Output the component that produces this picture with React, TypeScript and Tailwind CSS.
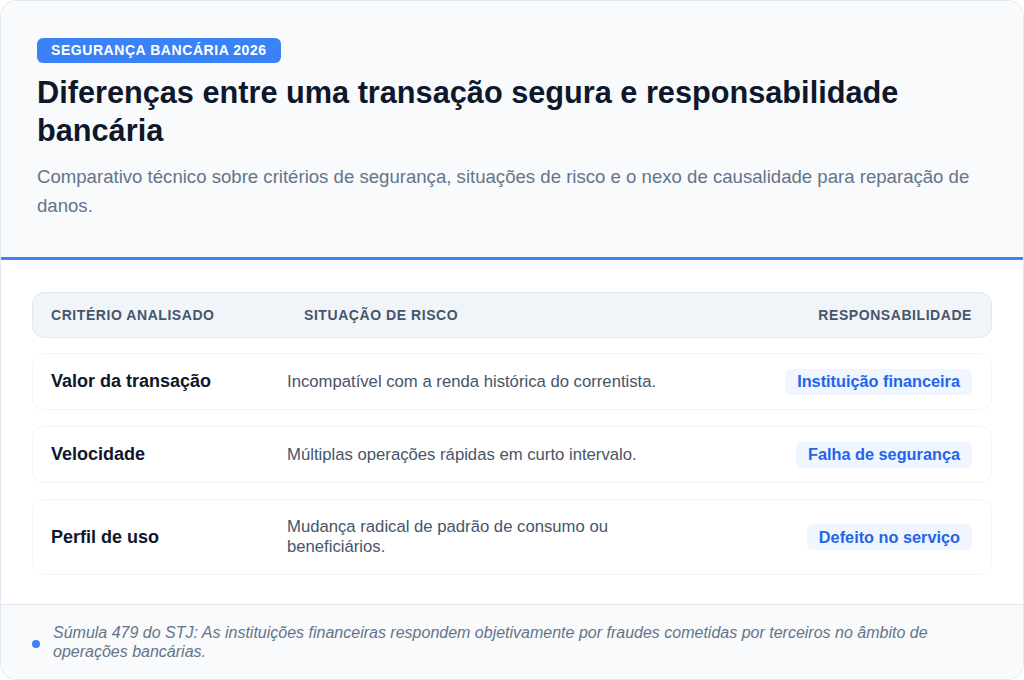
const rows = [
  {
    criterio: "Valor da transação",
    situacao: "Incompatível com a renda histórica do correntista.",
    resp: "Instituição financeira",
    h: "h-[57px]",
  },
  {
    criterio: "Velocidade",
    situacao: "Múltiplas operações rápidas em curto intervalo.",
    resp: "Falha de segurança",
    h: "h-[57px]",
  },
  {
    criterio: "Perfil de uso",
    situacao: "Mudança radical de padrão de consumo ou beneficiários.",
    resp: "Defeito no serviço",
    h: "h-[76px]",
  },
];

export default function App() {
  return (
    <div
      className="w-[1024px] h-[680px] bg-white"
      style={{ fontFamily: '"Liberation Sans", Arial, sans-serif' }}
    >
      <div className="h-full flex flex-col rounded-2xl border border-slate-200 overflow-hidden">
        {/* header */}
        <div className="bg-[#f8fafc] px-[36px] pt-[37px] pb-[37px] border-b-[3px] border-[#3b82f6]">
          <span className="inline-flex items-center h-[25px] px-[14px] rounded-md bg-[#3b82f6] text-white text-[14px] font-bold tracking-[0.04em]">
            SEGURANÇA BANCÁRIA 2026
          </span>
          <h1 className="mt-[11px] text-[30.7px] leading-[38px] font-bold text-[#0f172a] pr-[60px]">
            Diferenças entre uma transação segura e responsabilidade bancária
          </h1>
          <p className="mt-[12px] text-[18.6px] leading-[29px] text-[#64748b] pr-[10px]">
            Comparativo técnico sobre critérios de segurança, situações de risco e o nexo de
            causalidade para reparação de danos.
          </p>
        </div>

        {/* table */}
        <div className="flex-1 px-[31px] pt-[32px]">
          <div className="flex items-center h-[46px] rounded-xl bg-[#f1f5f9] border border-slate-200 pl-[18px] pr-[19px] text-[14px] font-bold tracking-[0.04em] text-[#475569]">
            <div className="w-[253px]">CRITÉRIO ANALISADO</div>
            <div className="flex-1">SITUAÇÃO DE RISCO</div>
            <div>RESPONSABILIDADE</div>
          </div>
          <div className="mt-[15px] flex flex-col gap-[16px]">
            {rows.map((r) => (
              <div
                key={r.criterio}
                className={`flex items-center ${r.h} rounded-xl border border-slate-100 bg-white pl-[18px] pr-[19px]`}
              >
                <div className="w-[236px] text-[18px] font-bold text-[#0f172a]">{r.criterio}</div>
                <div className="w-[370px] text-[16.7px] leading-[20px] text-[#475569]">
                  {r.situacao}
                </div>
                <div className="flex-1 flex justify-end">
                  <span className="inline-flex items-center h-[26px] px-[12px] rounded-md bg-[#eff6ff] text-[16.3px] font-bold text-[#2563eb]">
                    {r.resp}
                  </span>
                </div>
              </div>
            ))}
          </div>
        </div>

        {/* footer */}
        <div className="h-[75px] bg-[#f8fafc] border-t border-slate-200 flex items-center pl-[31px] pr-[40px]">
          <span className="w-[8px] h-[8px] rounded-full bg-[#3b82f6] shrink-0 mt-[3px]"></span>
          <p className="ml-[13px] text-[16px] leading-[19px] italic text-[#64748b]">
            Súmula 479 do STJ: As instituições financeiras respondem objetivamente por fraudes
            cometidas por terceiros no âmbito de operações bancárias.
          </p>
        </div>
      </div>
    </div>
  );
}
